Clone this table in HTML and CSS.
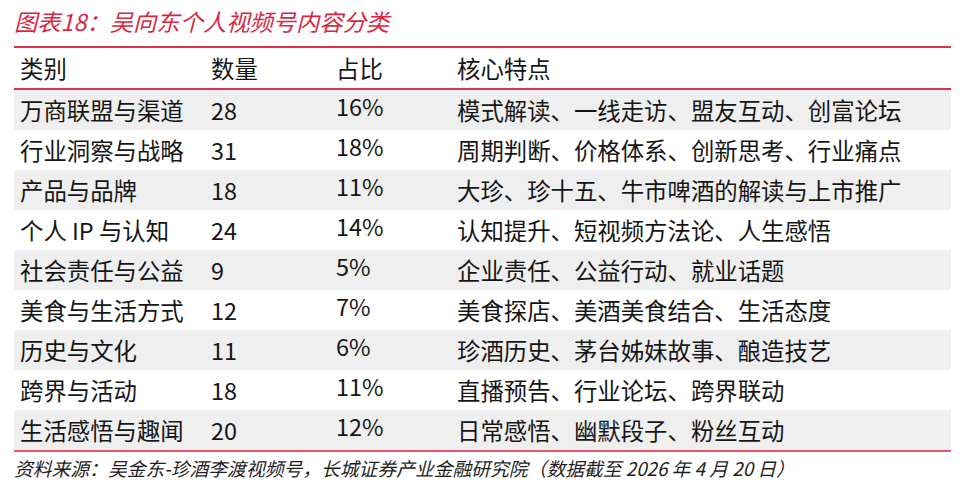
FILE: index.html
```html
<!DOCTYPE html>
<html lang="zh-CN">
<head>
<meta charset="utf-8">
<link rel="stylesheet" href="styles.css">
</head>
<body>
<div class="page">
  <h1 class="title">图表18：吴向东个人视频号内容分类</h1>
  <div class="table">
    <div class="row head">
      <div class="c">类别</div><div class="c">数量</div><div class="c">占比</div><div class="c">核心特点</div>
    </div>
    <div class="row alt"><div class="c">万商联盟与渠道</div><div class="c">28</div><div class="c pct">16%</div><div class="c">模式解读、一线走访、盟友互动、创富论坛</div></div>
    <div class="row"><div class="c">行业洞察与战略</div><div class="c">31</div><div class="c pct">18%</div><div class="c">周期判断、价格体系、创新思考、行业痛点</div></div>
    <div class="row alt"><div class="c">产品与品牌</div><div class="c">18</div><div class="c pct">11%</div><div class="c">大珍、珍十五、牛市啤酒的解读与上市推广</div></div>
    <div class="row"><div class="c">个人 IP 与认知</div><div class="c">24</div><div class="c pct">14%</div><div class="c">认知提升、短视频方法论、人生感悟</div></div>
    <div class="row alt"><div class="c">社会责任与公益</div><div class="c">9</div><div class="c pct">5%</div><div class="c">企业责任、公益行动、就业话题</div></div>
    <div class="row"><div class="c">美食与生活方式</div><div class="c">12</div><div class="c pct">7%</div><div class="c">美食探店、美酒美食结合、生活态度</div></div>
    <div class="row alt"><div class="c">历史与文化</div><div class="c">11</div><div class="c pct">6%</div><div class="c">珍酒历史、茅台姊妹故事、酿造技艺</div></div>
    <div class="row"><div class="c">跨界与活动</div><div class="c">18</div><div class="c pct">11%</div><div class="c">直播预告、行业论坛、跨界联动</div></div>
    <div class="row alt last"><div class="c">生活感悟与趣闻</div><div class="c">20</div><div class="c pct">12%</div><div class="c">日常感悟、幽默段子、粉丝互动</div></div>
  </div>
  <p class="source">资料来源：吴金东-珍酒李渡视频号，长城证券产业金融研究院（数据截至 2026 年 4 月 20 日）</p>
</div>
</body>
</html>
```

FILE: styles.css
```css
html, body {
  margin: 0;
  padding: 0;
  background: #ffffff;
}
.page {
  width: 937px;
  padding: 0 9px 0 14px;
  font-family: "Noto Sans CJK SC", "Noto Sans", sans-serif;
  color: #161616;
}
.title {
  margin: 0;
  padding-top: 6px;
  height: 40px;
  box-sizing: border-box;
  font-size: 23.3px;
  line-height: 30px;
  font-weight: normal;
  font-style: italic;
  color: #d8283f;
  white-space: nowrap;
}
.table {
  border-top: 2px solid #d9344b;
  border-bottom: 2px solid #e5566c;
  margin-top: 6px;
}
.row {
  display: grid;
  grid-template-columns: 191px 125px 121px 1fr;
  height: 40px;
  align-items: center;
  padding-left: 6px;
  font-size: 23.4px;
  line-height: 30px;
  white-space: nowrap;
}
.row.head {
  border-bottom: 2px solid #d9344b;
}
.row.alt {
  background: #efefef;
}
.c.pct {
  padding-bottom: 9px;
}
.source {
  margin: 3px 0 0 0;
  font-size: 18.8px;
  line-height: 26px;
  font-style: italic;
  color: #1e1e1e;
  white-space: nowrap;
}
```
